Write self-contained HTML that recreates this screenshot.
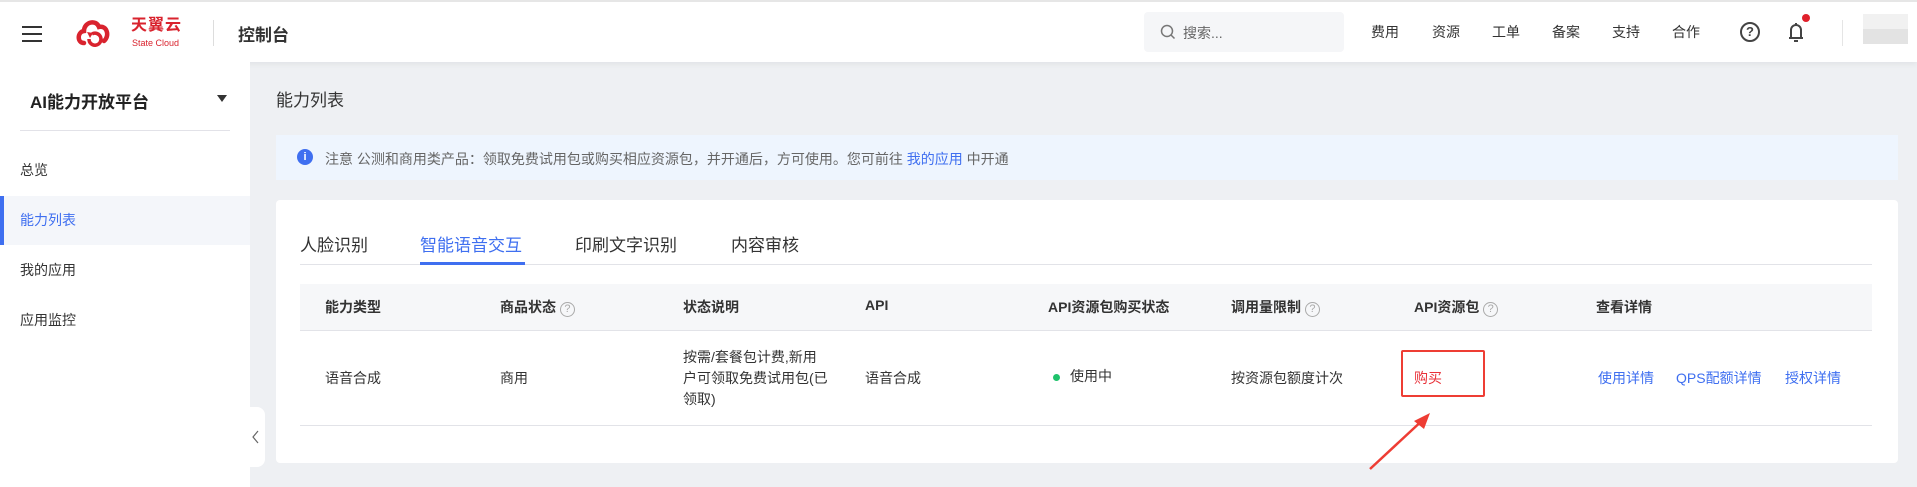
<!DOCTYPE html>
<html><head><meta charset="utf-8"><style>
*{margin:0;padding:0;box-sizing:border-box}
body{width:1917px;height:487px;overflow:hidden;background:#eef0f3;font-family:"Liberation Sans","Noto Sans CJK SC",sans-serif;color:#333;position:relative}
.a{position:absolute;white-space:nowrap}
.hdr{position:absolute;left:0;top:0;width:1917px;height:62px;background:#fff;border-top:2px solid #e6e6e6;box-shadow:0 2px 6px rgba(0,0,0,.06)}
.side{position:absolute;left:0;top:62px;width:250px;height:425px;background:#fff}
.th{font-weight:bold;font-size:14px;color:#333;top:297px}
.td{font-size:14px;color:#333}
.q{display:inline-block;width:15px;height:15px;border:1.3px solid #aaa;border-radius:50%;font-size:11px;color:#aaa;text-align:center;line-height:13px;font-weight:normal}
.lk{color:#3f6ff0;font-size:14px;top:368px}
</style></head><body>
<div class="hdr">
 <div class="a" style="left:22px;top:24px;width:20px;height:2px;background:#333"></div>
 <div class="a" style="left:22px;top:31px;width:20px;height:2px;background:#333"></div>
 <div class="a" style="left:22px;top:38px;width:20px;height:2px;background:#333"></div>
 <svg class="a" style="left:76px;top:15px" width="34" height="32" viewBox="0 0 34 32"><path d="M8 26 C1 26 1 15 8 14 C8 5 20 2 23 10 C31 8 34 19 28 24" fill="none" stroke="#d9232e" stroke-width="4.5" stroke-linecap="round"/><path d="M13 22 a6 6 0 1 0 3 -5" fill="none" stroke="#d9232e" stroke-width="3.5"/><path d="M11 15 l6 1 -3 5z" fill="#d9232e"/></svg>
 <div class="a" style="left:131px;top:14px;font-size:16px;line-height:20px;font-weight:bold;color:#d9232e;letter-spacing:1px">天翼云</div>
 <div class="a" style="left:132px;top:36px;font-size:9px;line-height:10px;color:#d9232e">State Cloud</div>
 <div class="a" style="left:213px;top:18px;width:1px;height:26px;background:#ddd"></div>
 <div class="a" style="left:238px;top:19px;font-size:17px;font-weight:bold;color:#333">控制台</div>
 <div class="a" style="left:1144px;top:10px;width:200px;height:40px;background:#f5f6f8;border-radius:4px"></div>
 <svg class="a" style="left:1160px;top:22px" width="16" height="16" viewBox="0 0 16 16"><circle cx="7" cy="7" r="5.5" fill="none" stroke="#777" stroke-width="1.5"/><path d="M11 11l3.5 3.5" stroke="#777" stroke-width="1.5"/></svg>
 <div class="a" style="left:1183px;top:21px;font-size:14px;color:#666">搜索...</div>
 <div class="a" style="left:1371px;top:20px;font-size:14px;color:#333">费用</div>
 <div class="a" style="left:1432px;top:20px;font-size:14px;color:#333">资源</div>
 <div class="a" style="left:1492px;top:20px;font-size:14px;color:#333">工单</div>
 <div class="a" style="left:1552px;top:20px;font-size:14px;color:#333">备案</div>
 <div class="a" style="left:1612px;top:20px;font-size:14px;color:#333">支持</div>
 <div class="a" style="left:1672px;top:20px;font-size:14px;color:#333">合作</div>
 <div class="a" style="left:1740px;top:20px;width:20px;height:20px;border:2px solid #444;border-radius:50%;font-size:13px;font-weight:bold;text-align:center;line-height:16px;color:#444">?</div>
 <svg class="a" style="left:1786px;top:18px" width="20" height="24" viewBox="0 0 20 24"><path d="M5 17 V10 a5 5 0 0 1 10 0 V17 M3 18 H17 M10 3 V5 M8 21 H12" fill="none" stroke="#444" stroke-width="2"/></svg>
 <div class="a" style="left:1802px;top:12px;width:8px;height:8px;border-radius:50%;background:#e0202b"></div>
 <div class="a" style="left:1842px;top:18px;width:1px;height:26px;background:#e5e5e5"></div>
 <div class="a" style="left:1863px;top:12px;width:45px;height:30px;background:linear-gradient(#f1f1f1 50%,#e3e3e3 50%)"></div>
</div>
<div class="side">
 <div class="a" style="left:30px;top:26px;font-size:17px;font-weight:bold;color:#222">AI能力开放平台</div>
 <div class="a" style="left:217px;top:33px;width:0;height:0;border-left:5px solid transparent;border-right:5px solid transparent;border-top:7px solid #333"></div>
 <div class="a" style="left:20px;top:68px;width:210px;height:1px;background:#e2e2e8"></div>
 <div class="a" style="left:20px;top:98px;font-size:14px">总览</div>
 <div class="a" style="left:0;top:134px;width:250px;height:49px;background:#f4f6fa"></div>
 <div class="a" style="left:0;top:134px;width:4px;height:49px;background:#3f6ff0"></div>
 <div class="a" style="left:20px;top:148px;font-size:14px;color:#3f6ff0">能力列表</div>
 <div class="a" style="left:20px;top:198px;font-size:14px">我的应用</div>
 <div class="a" style="left:20px;top:248px;font-size:14px">应用监控</div>
</div>
<div class="a" style="left:246px;top:407px;width:19px;height:60px;background:#fff;border-radius:0 8px 8px 0"></div>
<svg class="a" style="left:252px;top:430px" width="8" height="14"><path d="M6 1 L1 7 L6 13" fill="none" stroke="#666" stroke-width="1.2"/></svg>

<div class="a" style="left:276px;top:86px;font-size:17px;color:#333">能力列表</div>
<div class="a" style="left:276px;top:135px;width:1622px;height:45px;background:#eef5fe"></div>
<div class="a" style="left:297px;top:149px;width:16px;height:16px;border-radius:50%;background:#3f6ff0;color:#fff;font-size:11px;font-weight:bold;text-align:center;line-height:16px">i</div>
<div class="a" style="left:325px;top:149px;font-size:14px;color:#666">注意 公测和商用类产品：领取免费试用包或购买相应资源包，并开通后，方可使用。您可前往 <span style="color:#3f6ff0">我的应用</span> 中开通</div>

<div class="a" style="left:276px;top:200px;width:1622px;height:263px;background:#fff;border-radius:4px"></div>
<div class="a" style="left:300px;top:231px;font-size:17px;color:#333">人脸识别</div>
<div class="a" style="left:420px;top:231px;font-size:17px;color:#3f6ff0">智能语音交互</div>
<div class="a" style="left:575px;top:231px;font-size:17px;color:#333">印刷文字识别</div>
<div class="a" style="left:731px;top:231px;font-size:17px;color:#333">内容审核</div>
<div class="a" style="left:300px;top:264px;width:1572px;height:1px;background:#e2e3e8"></div>
<div class="a" style="left:420px;top:262px;width:105px;height:3px;background:#3f6ff0"></div>
<div class="a" style="left:300px;top:284px;width:1572px;height:47px;background:#f6f7f9;border-bottom:1px solid #e2e3e8"></div>
<div class="a th" style="left:325px">能力类型</div>
<div class="a th" style="left:500px">商品状态 <span class="q">?</span></div>
<div class="a th" style="left:683px">状态说明</div>
<div class="a th" style="left:865px">API</div>
<div class="a th" style="left:1048px">API资源包购买状态</div>
<div class="a th" style="left:1231px">调用量限制 <span class="q">?</span></div>
<div class="a th" style="left:1414px">API资源包 <span class="q">?</span></div>
<div class="a th" style="left:1596px">查看详情</div>
<div class="a" style="left:300px;top:425px;width:1572px;height:1px;background:#e2e3e8"></div>
<div class="a td" style="left:325px;top:368px">语音合成</div>
<div class="a td" style="left:500px;top:368px">商用</div>
<div class="a td" style="left:683px;top:347px;line-height:21px">按需/套餐包计费,新用<br>户可领取免费试用包(已<br>领取)</div>
<div class="a td" style="left:865px;top:368px">语音合成</div>
<div class="a" style="left:1053px;top:374px;width:7px;height:7px;border-radius:50%;background:#1ec26b"></div>
<div class="a td" style="left:1070px;top:366px">使用中</div>
<div class="a td" style="left:1231px;top:368px">按资源包额度计次</div>
<div class="a" style="left:1401px;top:350px;width:84px;height:47px;border:2.5px solid #ee3d34;border-radius:2px"></div>
<div class="a td" style="left:1414px;top:368px;color:#e8323a">购买</div>
<div class="a lk" style="left:1598px">使用详情</div>
<div class="a lk" style="left:1676px">QPS配额详情</div>
<div class="a lk" style="left:1785px">授权详情</div>
<svg class="a" style="left:1360px;top:405px" width="80" height="70"><path d="M10 64 L66 12" stroke="#ee3d34" stroke-width="2.5"/><path d="M70 8 L54 16 L64 24 Z" fill="#ee3d34"/></svg>
</body></html>
